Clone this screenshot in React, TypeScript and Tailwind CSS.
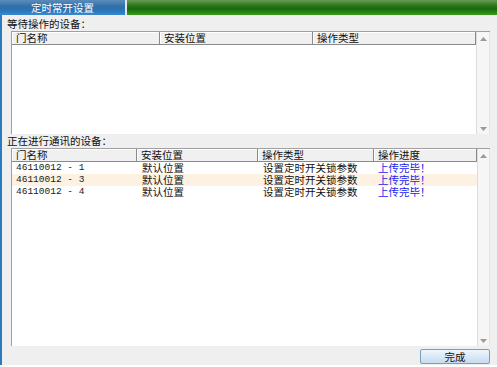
import React from "react";

const cjk = { fontFamily: '"Noto Sans CJK SC", "Liberation Sans", sans-serif' };
const mono = { fontFamily: '"Liberation Mono", "Noto Sans CJK SC", monospace' };

function UpArrow() {
  return (
    <svg width="7" height="4" viewBox="0 0 7 4">
      <path d="M0 4 L3.5 0 L7 4 Z" fill="#9a9a9a" />
    </svg>
  );
}
function DownArrow() {
  return (
    <svg width="7" height="4" viewBox="0 0 7 4">
      <path d="M0 0 L3.5 4 L7 0 Z" fill="#9a9a9a" />
    </svg>
  );
}

function HeaderCell({ w, label }: { w: number; label: string }) {
  return (
    <div
      className="flex h-full items-center overflow-hidden border-r border-[#8a8a8a] pl-[4px] text-[10.5px] leading-[12px] text-[#111]"
      style={{ width: w, boxShadow: "inset 1px 0 0 #ffffff, inset 0 1px 0 #ffffff", ...cjk }}
    >
      {label}
    </div>
  );
}

function ScrollBar() {
  return (
    <div className="flex w-[14px] flex-col items-center justify-between border-l border-r border-[#dcdcdc] border-r-[#e4e4e4] bg-[#f6f6f6] pb-[3px] pt-[5px]">
      <UpArrow />
      <DownArrow />
    </div>
  );
}

type Row = { name: string; loc: string; op: string; prog: string; hl?: boolean };

const rows: Row[] = [
  { name: "46110012 - 1", loc: "默认位置", op: "设置定时开关锁参数", prog: "上传完毕！" },
  { name: "46110012 - 3", loc: "默认位置", op: "设置定时开关锁参数", prog: "上传完毕！", hl: true },
  { name: "46110012 - 4", loc: "默认位置", op: "设置定时开关锁参数", prog: "上传完毕！" },
];

export default function App() {
  return (
    <div className="flex h-[367px] w-[497px] flex-col bg-white" style={cjk}>
      {/* title bar */}
      <div className="flex h-[15px] shrink-0">
        <div
          className="flex w-[125px] items-center justify-center text-[10.5px] leading-[12px] text-white"
          style={{ background: "linear-gradient(#5b8cba 0%, #2f6ea6 45%, #2a78bf 75%, #3a8ad0 100%)" }}
        >
          定时常开设置
        </div>
        <div className="w-[2px] bg-[#dfe6ec]" />
        <div
          className="flex-1"
          style={{ background: "linear-gradient(#6a9a58 0%, #2c7a1c 35%, #176a0c 60%, #3a9a1c 100%)" }}
        />
      </div>

      {/* body */}
      <div className="flex h-[350px] shrink-0 bg-[#efefef]">
        <div className="w-[2px] bg-[#2a7cc0]" />
        <div className="flex flex-1 flex-col">
          <div className="flex h-[15px] items-end pl-[5px] text-[10.5px] leading-[12px] text-[#111]">
            等待操作的设备：
          </div>
          {/* table 1 */}
          <div className="ml-[9px] mt-[1px] flex h-[103px] w-[479px] border-l border-t border-[#a0a0a0] bg-white">
            <div className="flex flex-1 flex-col">
              <div className="flex h-[13px] border-b border-[#8a8a8a] bg-[#f0f0f0]">
                <HeaderCell w={148} label="门名称" />
                <HeaderCell w={153} label="安装位置" />
                <HeaderCell w={163} label="操作类型" />
              </div>
              <div className="flex-1" />
            </div>
            <ScrollBar />
          </div>

          <div className="flex h-[13px] items-end pl-[5px] text-[10.5px] leading-[12px] text-[#111]">
            正在进行通讯的设备：
          </div>
          {/* table 2 */}
          <div className="ml-[9px] mt-[1px] flex h-[198px] w-[479px] border-l border-t border-[#a0a0a0] bg-white">
            <div className="flex flex-1 flex-col">
              <div className="flex h-[13px] shrink-0 border-b border-[#8a8a8a] bg-[#f0f0f0]">
                <HeaderCell w={125} label="门名称" />
                <HeaderCell w={121} label="安装位置" />
                <HeaderCell w={116} label="操作类型" />
                <HeaderCell w={103} label="操作进度" />
              </div>
              {rows.map((r, i) => (
                <div
                  key={i}
                  className={`flex h-[12px] items-center overflow-hidden text-[10.5px] leading-[12px] ${
                    r.hl ? "bg-[#fdf2e2]" : "bg-white"
                  }`}
                >
                  <div className="w-[125px] pl-[4px] text-[9.5px] leading-[12px] text-[#1a1a1a]" style={mono}>
                    {r.name}
                  </div>
                  <div className="w-[121px] pl-[5px] text-[#111]">{r.loc}</div>
                  <div className="w-[116px] pl-[5px] text-[#111]">{r.op}</div>
                  <div className="w-[103px] pl-[4px] text-[#1a1aee]">{r.prog}</div>
                </div>
              ))}
              <div className="flex-1" />
            </div>
            <ScrollBar />
          </div>

          <div className="flex flex-1 items-start justify-end pr-[7px] pt-[3px]">
            <button
              className="flex h-[15px] w-[70px] items-center justify-center rounded-[2px] border border-[#7f9db9] text-[10.5px] leading-[12px] text-[#111]"
              style={{ background: "linear-gradient(#eef5fc 0%, #dbe8f6 50%, #c6dbf1 100%)", ...cjk }}
            >
              完成
            </button>
          </div>
        </div>
      </div>
    </div>
  );
}
